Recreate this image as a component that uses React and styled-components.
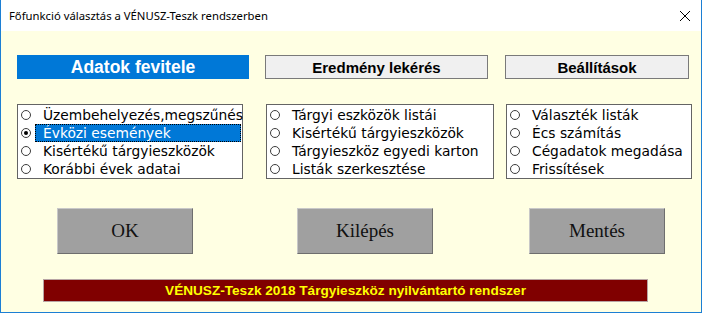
import styled, { createGlobalStyle } from "styled-components";
import { useState } from "react";

const Global = createGlobalStyle`
  html, body {
    margin: 0;
    padding: 0;
    background: #ffffff;
  }
`;

const Window = styled.div`
  box-sizing: border-box;
  width: 702px;
  height: 313px;
  border: 1px solid #1c7fd4;
  border-top: none;
  display: flex;
  flex-direction: column;
  background: #ffffe3;
  overflow: hidden;
`;

const TitleBar = styled.div`
  height: 31px;
  flex-shrink: 0;
  background: #ffffff;
  display: flex;
  align-items: center;
  justify-content: space-between;
  padding: 0 8px 0 8px;
  font-family: "Noto Sans", "Open Sans", sans-serif;
  font-size: 11.3px;
  color: #000;
`;

const Close = styled.div`
  width: 14px;
  height: 14px;
  margin-right: 1px;
  display: flex;
  align-items: center;
  justify-content: center;
`;

const Body = styled.div`
  flex: 1;
  padding: 24px 0 0 16px;
  display: flex;
  flex-direction: column;
`;

const TabRow = styled.div`
  display: flex;
  gap: 16px;
`;

const Tab = styled.div`
  box-sizing: border-box;
  width: ${(p) => p.w}px;
  height: 24px;
  display: flex;
  align-items: center;
  justify-content: center;
  font-family: "Liberation Sans", Arial, sans-serif;
  font-weight: bold;
  font-size: ${(p) => (p.active ? 17.5 : 15)}px;
  color: ${(p) => (p.active ? "#ffffff" : "#000000")};
  background: ${(p) => (p.active ? "#0078d7" : "#f0f0f0")};
  border: 1px solid ${(p) => (p.active ? "#0078d7" : "#7a7a7a")};
  margin-left: ${(p) => p.ml || 0}px;
`;

const ListRow = styled.div`
  display: flex;
  margin-top: 25px;
`;

const List = styled.div`
  box-sizing: border-box;
  width: ${(p) => p.w}px;
  height: 75px;
  margin-left: ${(p) => p.ml || 0}px;
  background: #ffffff;
  border: 1px solid #646464;
  padding-top: 1px;
  display: flex;
  flex-direction: column;
`;

const Item = styled.div`
  height: 18px;
  display: flex;
  align-items: center;
  cursor: default;
`;

const Radio = styled.span`
  box-sizing: border-box;
  width: 10px;
  height: 10px;
  border-radius: 50%;
  border: 1.5px solid #3c3c3c;
  background: #ffffff;
  margin-left: 3px;
  flex-shrink: 0;
  display: flex;
  align-items: center;
  justify-content: center;
  &::after {
    content: "";
    width: 4px;
    height: 4px;
    border-radius: 50%;
    background: ${(p) => (p.checked ? "#000" : "transparent")};
  }
`;

const Label = styled.span`
  box-sizing: border-box;
  flex: 1;
  height: 18px;
  margin-left: 4px;
  margin-right: 1px;
  padding-left: 8px;
  display: flex;
  align-items: center;
  font-family: "DejaVu Sans", Verdana, sans-serif;
  font-size: 13.8px;
  white-space: nowrap;
  color: ${(p) => (p.selected ? "#ffffff" : "#000000")};
  background: ${(p) => (p.selected ? "#0078d7" : "transparent")};
  outline: ${(p) => (p.selected ? "1px dotted #000" : "none")};
  outline-offset: -1px;
`;

const ButtonRow = styled.div`
  display: flex;
  margin-top: 29px;
`;

const Button = styled.button`
  box-sizing: border-box;
  width: 136px;
  height: 46px;
  margin-left: ${(p) => p.ml}px;
  background: #a0a0a0;
  border: 1px solid;
  border-color: #c8c8c8 #6e6e6e #6e6e6e #c8c8c8;
  font-family: "Liberation Serif", "Times New Roman", serif;
  font-size: 19px;
  color: #111111;
  padding: 0;
  cursor: pointer;
`;

const StatusBar = styled.div`
  box-sizing: border-box;
  width: 605px;
  height: 23px;
  margin: 25px 0 0 26px;
  background: #800000;
  border: 1px solid #b8a4a4;
  display: flex;
  align-items: center;
  justify-content: center;
  font-family: "Liberation Sans", Arial, sans-serif;
  font-weight: bold;
  font-size: 13.6px;
  color: #ffff00;
`;

const lists = [
  {
    w: 226,
    ml: 0,
    items: [
      "Üzembehelyezés,megszűnés",
      "Évközi események",
      "Kisértékű tárgyieszközök",
      "Korábbi évek adatai",
    ],
  },
  {
    w: 228,
    ml: 23,
    items: [
      "Tárgyi eszközök listái",
      "Kisértékű tárgyieszközök",
      "Tárgyieszköz egyedi karton",
      "Listák szerkesztése",
    ],
  },
  {
    w: 186,
    ml: 12,
    items: ["Választék listák", "Écs számítás", "Cégadatok megadása", "Frissítések"],
  },
];

const App = () => {
  const [sel, setSel] = useState({ list: 0, item: 1 });

  return (
    <>
      <Global />
      <Window>
        <TitleBar>
          <span>Főfunkció választás a VÉNUSZ-Teszk rendszerben</span>
          <Close>
            <svg width="12" height="12" viewBox="0 0 12 12">
              <path d="M1 1 L11 11 M11 1 L1 11" stroke="#000" strokeWidth="1" />
            </svg>
          </Close>
        </TitleBar>
        <Body>
          <TabRow>
            <Tab w={232} active>
              Adatok fevitele
            </Tab>
            <Tab w={223}>Eredmény lekérés</Tab>
            <Tab w={184} ml={1}>
              Beállítások
            </Tab>
          </TabRow>
          <ListRow>
            {lists.map((l, li) => (
              <List key={li} w={l.w} ml={l.ml}>
                {l.items.map((it, ii) => {
                  const on = sel.list === li && sel.item === ii;
                  return (
                    <Item key={ii} onClick={() => setSel({ list: li, item: ii })}>
                      <Radio checked={on} />
                      <Label selected={on}>{it}</Label>
                    </Item>
                  );
                })}
              </List>
            ))}
          </ListRow>
          <ButtonRow>
            <Button ml={40}>OK</Button>
            <Button ml={104}>Kilépés</Button>
            <Button ml={96}>Mentés</Button>
          </ButtonRow>
          <StatusBar>VÉNUSZ-Teszk 2018 Tárgyieszköz nyilvántartó rendszer</StatusBar>
        </Body>
      </Window>
    </>
  );
};

export default App;
